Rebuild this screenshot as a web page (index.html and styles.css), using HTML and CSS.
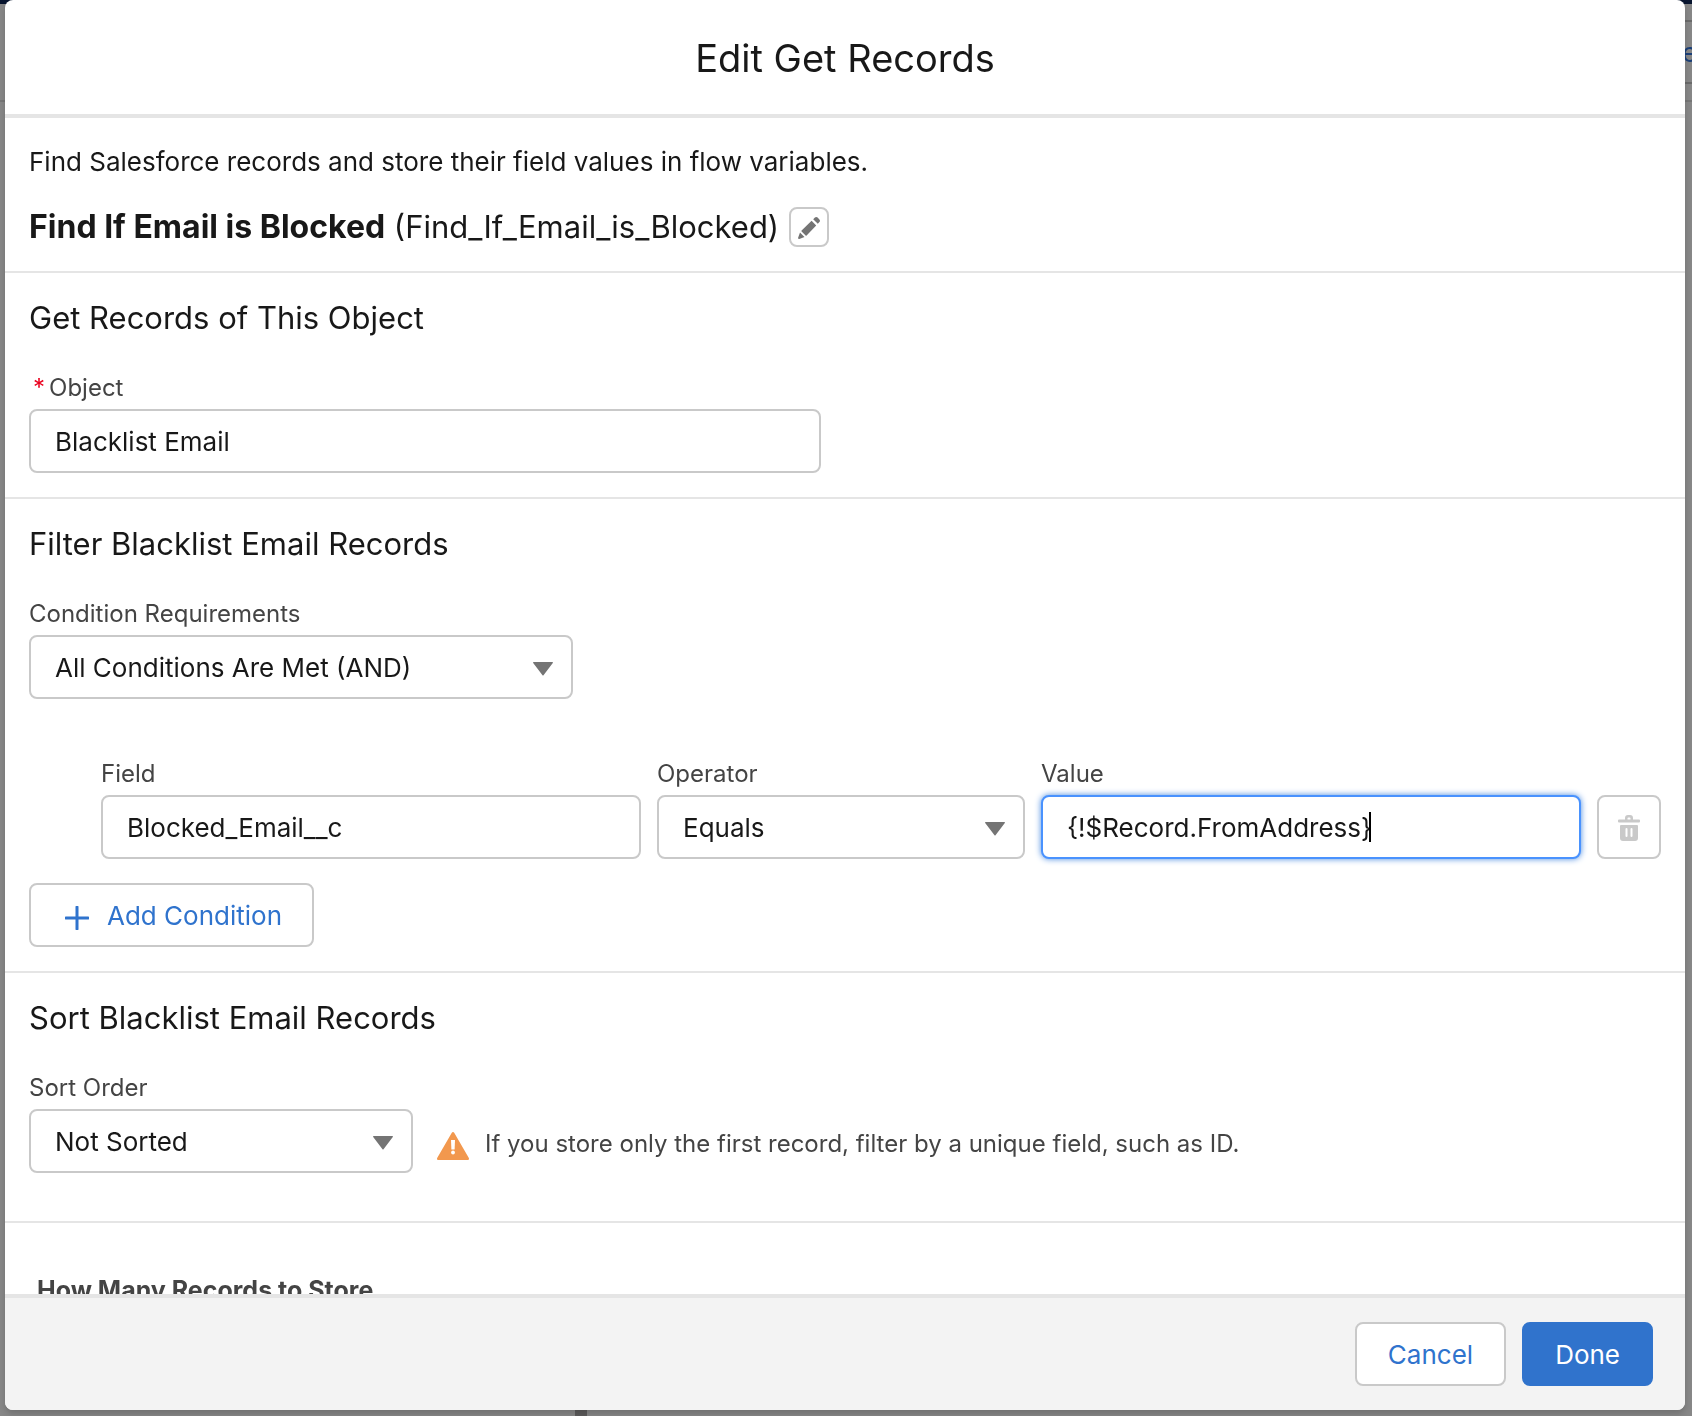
FILE: index.html
```html
<!DOCTYPE html>
<html lang="en">
<head>
<meta charset="utf-8">
<meta name="viewport" content="width=device-width, initial-scale=1">
<title>Edit Get Records</title>
<link rel="stylesheet" href="styles.css">
</head>
<body>
<div class="builder" aria-hidden="true">
  <div class="builder-bar"></div>
  <div class="builder-toolbar"><button class="builder-action" type="button" tabindex="-1">e</button></div>
  <div class="builder-canvas"><span class="builder-handle"></span></div>
</div>
<div class="dialog" role="dialog" aria-modal="true" aria-labelledby="dialog-title">
  <header class="dialog-header">
    <h1 class="dialog-title" id="dialog-title">Edit Get Records</h1>
  </header>
  <main class="dialog-body">
    <section class="section section-intro">
      <p class="description">Find Salesforce records and store their field values in flow variables.</p>
      <div class="name-row">
        <p class="name"><strong>Find If Email is Blocked</strong> (Find_If_Email_is_Blocked)</p>
        <button class="icon-button icon-button-small" type="button" aria-label="Edit label">
          <svg class="icon-pencil" viewBox="0 0 22 22" aria-hidden="true"><path d="M13.600 3.800l4.600 4.600L8.600 18.400c-.3.300-.7.300-1 0L3.600 14.400c-.3-.3-.3-.7 0-1zM15.200 2.200l1.700-1.600c.8-.8 1.900-.8 2.700 0l1.800 1.800c.8.800.8 1.900 0 2.700L19.800 6.800zM2 15.600l4.500 4.500-5.200 1.800c-.8.200-1.400-.4-1.200-1.200z"/></svg>
        </button>
      </div>
    </section>
    <section class="section">
      <h2 class="section-title">Get Records of This Object</h2>
      <div class="field field-object">
        <label class="label label-required" for="object"><span class="required">*</span>Object</label>
        <input class="control" id="object" type="text" value="Blacklist Email">
      </div>
    </section>
    <section class="section">
      <h2 class="section-title">Filter Blacklist Email Records</h2>
      <div class="field field-logic">
        <label class="label" for="logic">Condition Requirements</label>
        <div class="select">
          <select class="control" id="logic"><option>All Conditions Are Met (AND)</option></select>
          <svg class="select-arrow" viewBox="0 0 20 14" aria-hidden="true"><path d="M.7 0h18.600c.6 0 .9.600.5 1.100L10.500 13.300c-.3.400-.7.400-1 0L.2 1.100C-.2.600.1 0 .7 0z"/></svg>
        </div>
      </div>
      <div class="condition">
        <div class="field">
          <label class="label" for="field">Field</label>
          <input class="control" id="field" type="text" value="Blocked_Email__c">
        </div>
        <div class="field">
          <label class="label" for="operator">Operator</label>
          <div class="select">
            <select class="control" id="operator"><option>Equals</option></select>
            <svg class="select-arrow" viewBox="0 0 20 14" aria-hidden="true"><path d="M.7 0h18.600c.6 0 .9.600.5 1.100L10.500 13.300c-.3.400-.7.400-1 0L.2 1.100C-.2.600.1 0 .7 0z"/></svg>
          </div>
        </div>
        <div class="field field-value">
          <label class="label" for="value">Value</label>
          <input class="control control-active" id="value" type="text" value="{!$Record.FromAddress}">
          <span class="caret"></span>
        </div>
        <button class="icon-button" type="button" aria-label="Delete condition" disabled>
          <svg class="icon-trash" viewBox="0 0 22 26" aria-hidden="true"><path fill-rule="evenodd" d="M1 4.500h6V3a3 3 0 0 1 3-3h2a3 3 0 0 1 3 3v1.500h6a1 1 0 0 1 1 1v1a1 1 0 0 1-1 1H1a1 1 0 0 1-1-1v-1a1 1 0 0 1 1-1zm8.500 0h3v-1a1 1 0 0 0-1-1h-1a1 1 0 0 0-1 1zM3 10h16a1 1 0 0 1 1 1v12a3 3 0 0 1-3 3H5a3 3 0 0 1-3-3V11a1 1 0 0 1 1-1zm4.500 4v7a1 1 0 0 0 2 0v-7a1 1 0 0 0-2 0zm5 0v7a1 1 0 0 0 2 0v-7a1 1 0 0 0-2 0z"/></svg>
        </button>
      </div>
      <button class="button button-add" type="button">
        <svg class="icon-plus" viewBox="0 0 24 24" aria-hidden="true"><path d="M12 1v22M1 12h22"/></svg>
        Add Condition
      </button>
    </section>
    <section class="section section-sort">
      <h2 class="section-title">Sort Blacklist Email Records</h2>
      <div class="sort-row">
        <div class="field field-sort">
          <label class="label" for="sort">Sort Order</label>
          <div class="select">
            <select class="control" id="sort"><option>Not Sorted</option></select>
            <svg class="select-arrow" viewBox="0 0 20 14" aria-hidden="true"><path d="M.7 0h18.600c.6 0 .9.600.5 1.100L10.500 13.300c-.3.400-.7.400-1 0L.2 1.100C-.2.600.1 0 .7 0z"/></svg>
          </div>
        </div>
        <p class="hint">
          <svg class="icon-warning" viewBox="0 0 32 28" aria-hidden="true"><path class="warning-shape" d="M14.800.8c.6-1 1.800-1 2.400 0l14.500 25c.7 1.100.1 2.200-1.100 2.200H1.400C.2 28-.4 26.900.3 25.800z"/><path class="warning-mark" d="M14 8h4l-.4 9.500h-3.200z"/><circle class="warning-mark" cx="16" cy="20.500" r="1.900"/></svg>
          <span>If you store only the first record, filter by a unique field, such as ID.</span>
        </p>
      </div>
    </section>
    <section class="section section-store">
      <h3 class="store-title">How Many Records to Store</h3>
    </section>
  </main>
  <footer class="dialog-footer">
    <button class="button" type="button">Cancel</button>
    <button class="button button-primary" type="button">Done</button>
  </footer>
</div>
</body>
</html>
```
FILE: styles.css
```css
* {
  box-sizing: border-box;
}

body {
  margin: 0;
  height: 100vh;
  overflow: hidden;
  background: #878787;
  color: #181818;
  font-family: Inter, "Liberation Sans", sans-serif;
  font-size: 26px;
  line-height: 36px;
}

h1,
h2,
h3,
p {
  margin: 0;
  font-weight: 400;
}

button,
input,
select {
  font: inherit;
  color: inherit;
}

/* Flow builder, dimmed behind the dialog */
.builder {
  position: fixed;
  inset: 0;
  display: flex;
  flex-direction: column;
}

.builder-bar {
  height: 4px;
  background: #08152f;
}

.builder-toolbar {
  display: flex;
  justify-content: flex-end;
  padding: 16px 0;
  border-bottom: 2px solid #777;
}

.builder-action {
  width: 10px;
  height: 64px;
  padding: 2px 0 0;
  border: solid #6b6b6b;
  border-width: 2px 0;
  background: none;
  color: #1b4079;
  text-align: left;
  overflow: hidden;
}

.builder-canvas {
  flex: 1;
  display: flex;
  align-items: flex-end;
  padding-left: 34%;
}

.builder-handle {
  width: 12px;
  height: 6px;
  background: #5c5b5b;
}

.dialog {
  position: relative;
  display: flex;
  flex-direction: column;
  height: calc(100vh - 6px);
  margin: 0 7px 6px 5px;
  border-radius: 8px;
  background: #fff;
  box-shadow: 0 4px 6px rgba(0, 0, 0, 0.16);
  overflow: hidden;
}

.dialog-header {
  padding: 34px 24px 32px;
  border-bottom: 4px solid #e5e5e5;
  text-align: center;
}

.dialog-title {
  font-size: 38px;
  line-height: 48px;
}

.dialog-body {
  flex: 1;
  min-height: 0;
  overflow: hidden;
}

.section {
  padding: 25px 24px 24px;
  border-bottom: 2px solid #e5e5e5;
}

.section-intro {
  padding-top: 26px;
}

.name-row {
  display: flex;
  align-items: center;
  gap: 10px;
  margin-top: 27px;
}

.name,
.section-title {
  font-size: 31px;
  line-height: 40px;
}

.name strong {
  font-size: 32px;
  font-weight: 700;
}

.section-title {
  margin-bottom: 32px;
}

.field {
  display: flex;
  flex-direction: column;
  gap: 3px;
}

.field-object {
  width: 792px;
  max-width: 100%;
}

.field-logic {
  width: calc(100% / 3);
}

.field-sort {
  width: 384px;
}

.field-value {
  position: relative;
}

.label {
  color: #444;
  font-size: 24px;
  line-height: 36px;
}

.label-required {
  padding-left: 4px;
}

.required {
  margin-right: 4px;
  color: #ea001e;
}

.control {
  display: block;
  width: 100%;
  height: 64px;
  padding: 0 24px;
  border: 2px solid #c9c9c9;
  border-radius: 8px;
  background: #fff;
  outline: none;
  appearance: none;
}

.control-active {
  border-color: #4992fe;
  box-shadow: 0 0 6px #4a8be0;
}

.caret {
  position: absolute;
  left: 328px;
  bottom: 17px;
  width: 2px;
  height: 30px;
  background: #000;
}

.select {
  position: relative;
}

.select .control {
  padding-top: 2px;
}

.select-arrow {
  position: absolute;
  top: 27px;
  right: 20px;
  width: 20px;
  height: 14px;
  fill: #747474;
  pointer-events: none;
}

.condition {
  display: grid;
  grid-template-columns: 540fr 368fr 540fr 64px;
  align-items: end;
  gap: 16px;
  margin: 57px 0 24px;
  padding-left: 72px;
}

.icon-button {
  display: flex;
  align-items: center;
  justify-content: center;
  width: 64px;
  height: 64px;
  padding: 2px 0 0;
  border: 2px solid #c9c9c9;
  border-radius: 8px;
  background: #fff;
}

.icon-button-small {
  width: 40px;
  height: 40px;
}

.icon-pencil {
  width: 22px;
  height: 22px;
  fill: #747474;
}

.icon-trash {
  width: 22px;
  height: 26px;
  fill: #c9c9c9;
}

.button {
  display: flex;
  align-items: center;
  height: 64px;
  padding: 2px 31px 0;
  border: 2px solid #c9c9c9;
  border-radius: 8px;
  background: #fff;
  color: #2f73cd;
}

.button-add {
  gap: 18px;
  padding: 2px 30px 0 34px;
}

.button-primary {
  border-color: #3073cc;
  background: #3073cc;
  color: #fff;
}

.icon-plus {
  width: 24px;
  height: 24px;
  margin-top: 3px;
  fill: none;
  stroke: #2f73cd;
  stroke-width: 3;
  stroke-linecap: round;
}

.section-sort {
  padding-bottom: 48px;
}

.sort-row {
  display: flex;
  align-items: flex-end;
  gap: 24px;
}

.hint {
  display: flex;
  align-items: center;
  gap: 16px;
  height: 58px;
  color: #444;
  font-size: 24px;
}

.icon-warning {
  width: 32px;
  height: 28px;
  margin-top: 4px;
}

.warning-shape {
  fill: #f2984e;
}

.warning-mark {
  fill: #fff;
}

.section-store {
  padding: 49px 32px 48px;
  border-bottom: 0;
}

.store-title {
  color: #444;
  font-size: 25px;
  font-weight: 700;
}

.dialog-footer {
  display: flex;
  justify-content: flex-end;
  gap: 16px;
  padding: 24px 32px;
  border-top: 4px solid #e5e5e5;
  background: #f3f3f3;
}
```
